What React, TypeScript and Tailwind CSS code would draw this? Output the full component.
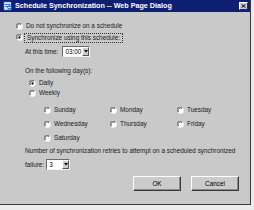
import React from 'react';

const font = { fontFamily: '"Liberation Sans", Arial, sans-serif' };

// classic win2k radio, drawn small to match the scaled screenshot
const Radio: React.FC<{ checked?: boolean }> = ({ checked }) => (
  <svg width="7" height="7" viewBox="0 0 12 12" className="shrink-0">
    <circle cx="6" cy="6" r="5.5" fill="#ffffff" />
    <path d="M1.5 9 A5 5 0 0 1 9 1.5" fill="none" stroke="#777" strokeWidth="1.5" />
    <path d="M2.8 8.4 A3.6 3.6 0 0 1 8.4 2.8" fill="none" stroke="#222" strokeWidth="1.2" />
    {checked && <circle cx="6" cy="6" r="2" fill="#111" />}
  </svg>
);

const Select: React.FC<{ value: string; w: string }> = ({ value, w }) => (
  <div className={`flex items-stretch bg-white border border-t-[#6b6b6b] border-l-[#6b6b6b] border-r-[#f4f4f4] border-b-[#f4f4f4] ${w}`}>
    <div className="flex-1 flex items-center pl-[2px] text-black">{value}</div>
    <div className="w-[7px] bg-[#cbcbcb] border border-t-white border-l-white border-r-[#555] border-b-[#555] flex items-center justify-center">
      <svg width="4" height="3" viewBox="0 0 4 3">
        <path d="M0 0h4L2 2.5z" fill="#000" />
      </svg>
    </div>
  </div>
);

const Button: React.FC<{ label: string }> = ({ label }) => (
  <div className="w-[48px] h-[15px] flex items-center justify-center bg-[#cbcbcb] border border-t-white border-l-white border-r-[#3a3a3a] border-b-[#3a3a3a] shadow-[inset_-1px_-1px_0_#8a8a8a] text-black">
    {label}
  </div>
);

export default function App() {
  return (
    <div className="w-[254px] h-[210px] bg-[#ececec] overflow-hidden" style={font}>
      <div className="w-[251px] h-[205px] bg-[#c9c9c9] border-r border-b border-[#3b3b3b] flex flex-col text-[6.4px] text-[#1a1a1a]">
        {/* title bar */}
        <div className="h-[12px] bg-[#0f1f72] flex items-center pl-[3px] pr-[2px]">
          <svg width="10" height="10" viewBox="0 0 10 10" className="shrink-0">
            <rect x="1" y="1" width="7" height="8" fill="#e8eef8" stroke="#5a78b0" strokeWidth="0.6" />
            <rect x="2" y="3" width="5" height="1" fill="#3b6bc4" />
            <rect x="2" y="5" width="4" height="1" fill="#3b6bc4" />
            <circle cx="6.5" cy="6.5" r="2.3" fill="#2e7ad8" />
            <path d="M5 6.5h3" stroke="#fff" strokeWidth="0.7" />
          </svg>
          <span className="ml-[2px] text-white font-bold text-[7.2px] leading-none">
            Schedule Synchronization -- Web Page Dialog
          </span>
          <div className="ml-auto w-[9px] h-[8px] bg-[#cbcbcb] border border-t-white border-l-white border-r-[#333] border-b-[#333] flex items-center justify-center">
            <svg width="5" height="4" viewBox="0 0 5 4">
              <path d="M0.5 0.3L4.5 3.7M4.5 0.3L0.5 3.7" stroke="#000" strokeWidth="1" />
            </svg>
          </div>
        </div>

        <div className="flex flex-col pl-[16px] pt-[9px]">
          <div className="h-[10px] flex items-center">
            <Radio />
            <span className="ml-[3px]">Do not synchronize on a schedule</span>
          </div>
          <div className="h-[11px] mt-[1px] flex items-center">
            <Radio checked />
            <span className="ml-[1px] px-[2px] h-[10px] flex items-center border border-dotted border-[#333]">
              Synchronize using this schedule:
            </span>
          </div>

          <div className="ml-[9px] mt-[3px] h-[11px] flex items-center">
            <span>At this time:</span>
            <div className="ml-[4px] h-[11px] flex">
              <Select value="03:00" w="w-[28px]" />
            </div>
          </div>

          <div className="ml-[9px] mt-[9px] h-[10px] flex items-center">On the following day(s):</div>

          <div className="ml-[13px] mt-[2px] h-[10px] flex items-center">
            <Radio checked />
            <span className="ml-[3px]">Daily</span>
          </div>
          <div className="ml-[13px] h-[10px] flex items-center">
            <Radio />
            <span className="ml-[3px]">Weekly</span>
          </div>

          <div className="ml-[28px] mt-[7px] grid grid-cols-[66px_67px_auto] gap-y-[4px]">
            {['Sunday', 'Monday', 'Tuesday', 'Wednesday', 'Thursday', 'Friday', 'Saturday'].map((d) => (
              <div key={d} className="h-[10px] flex items-center">
                <Radio />
                <span className="ml-[3px]">{d}</span>
              </div>
            ))}
          </div>

          <div className="ml-[9px] mt-[3px] h-[10px] flex items-center">
            Number of synchronization retries to attempt on a scheduled synchronized
          </div>
          <div className="ml-[9px] mt-[3px] h-[11px] flex items-center">
            <span>failure:</span>
            <div className="ml-[2px] h-[11px] flex">
              <Select value="3" w="w-[24px]" />
            </div>
          </div>

          <div className="mt-[6px] flex gap-[10px] pl-[117px]">
            <Button label="OK" />
            <Button label="Cancel" />
          </div>
        </div>
      </div>
    </div>
  );
}
